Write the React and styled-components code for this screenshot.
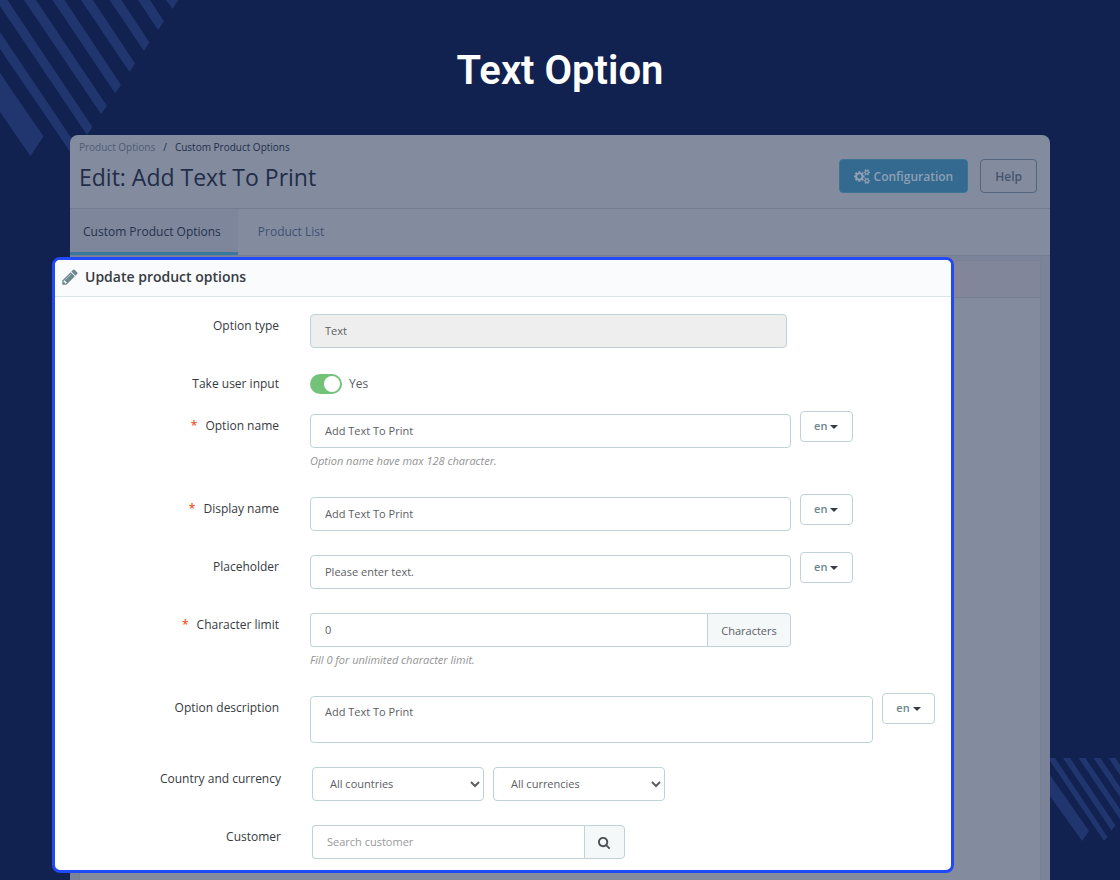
import React from 'react'
import styled, { createGlobalStyle, css } from 'styled-components'

const GlobalStyle = createGlobalStyle`
  *, *::before, *::after {
    box-sizing: border-box;
  }
  body {
    margin: 0;
    background: #112150;
    color: #363a41;
    font-family: 'Open Sans', 'Noto Sans', sans-serif;
    font-size: 12px;
  }
  button, input, select, textarea {
    font-family: inherit;
    margin: 0;
  }
`

const Page = styled.div`
  position: relative;
  display: flex;
  flex-direction: column;
  min-height: 100vh;
  padding: 0 70px;
  overflow: hidden;
`

const Stripes = styled.svg`
  position: absolute;
  fill: #21366f;
  ${({ corner }) =>
    corner === 'top'
      ? css`
          top: 0;
          left: 0;
        `
      : css`
          right: 0;
          bottom: 39px;
        `}
`

const Title = styled.h1`
  margin: 0;
  padding: 47px 0 40px;
  color: #fff;
  font-family: Roboto, sans-serif;
  font-size: 40px;
  font-weight: 600;
  line-height: 48px;
  text-align: center;
`

const Backdrop = styled.main`
  position: relative;
  flex: 1;
  display: flex;
  flex-direction: column;
  border-radius: 8px 8px 0 0;
  background: #838b9f;
`

const TopBar = styled.header`
  display: flex;
  justify-content: space-between;
  align-items: center;
  height: 74px;
  padding: 0 13px 0 9px;
  border-bottom: 1px solid #737c92;
`

const Crumbs = styled.nav`
  display: flex;
  gap: 8px;
  color: #222e4a;
  font-size: 10px;
  line-height: 16px;

  a {
    color: #4f5b74;
    text-decoration: none;
  }
`

const PageName = styled.h2`
  margin: 4px 0 10px;
  color: #222d48;
  font-size: 23px;
  font-weight: 400;
  line-height: 36px;
`

const Actions = styled.div`
  display: flex;
  gap: 12px;
  padding-top: 8px;
`

const ActionButton = styled.button`
  display: flex;
  align-items: center;
  gap: 4px;
  height: 34px;
  padding: 2px 14px 0;
  border: 1px solid ${({ primary }) => (primary ? '#3b7596' : '#54657f')};
  border-radius: 4px;
  background: ${({ primary }) => (primary ? '#346a90' : 'transparent')};
  color: ${({ primary }) => (primary ? '#8f9fb4' : '#43536e')};
  font-size: 12px;
  font-weight: 600;
`

const Tabs = styled.nav`
  display: flex;
  height: 47px;
  border-bottom: 1px solid #747d92;
`

const Tab = styled.a`
  padding: 0 ${({ active }) => (active ? 17 : 20)}px 0 ${({ active }) => (active ? 13 : 20)}px;
  border-bottom: 3px solid ${({ active }) => (active ? '#387a9e' : 'transparent')};
  background: ${({ active }) => (active ? '#7d869b' : 'transparent')};
  color: ${({ active }) => (active ? '#25314d' : '#3f5173')};
  font-size: 12px;
  line-height: 46px;
  text-decoration: none;
`

const Body = styled.div`
  flex: 1;
  display: grid;
  padding: 0 9px;
  background: #7a8397;
`

const BackCard = styled.div`
  grid-area: 1 / 1;
  margin-top: 4px;
  border: 1px solid #788095;
  border-bottom: 0;
  background: #838b9f;

  &::before {
    content: '';
    display: block;
    height: 37px;
    border-bottom: 1px solid #757e93;
    background: #81869b;
  }
`

const Card = styled.section`
  grid-area: 1 / 1;
  z-index: 1;
  align-self: start;
  margin: 1px 87px 7px -27px;
  border: 3px solid #2149f5;
  border-radius: 8px;
  background: #fff;
  overflow: hidden;
`

const CardHeader = styled.h3`
  display: flex;
  align-items: center;
  gap: 6px;
  height: 37px;
  margin: 0;
  padding: 0 6px 3px;
  border-bottom: 1px solid #dbe6e9;
  background: #fafbfc;
  font-size: 14px;
  font-weight: 600;

  svg {
    color: #6c868e;
  }
`

const Form = styled.form`
  display: flex;
  flex-direction: column;
  gap: 24px;
  padding: 17px 0 11px;
`

const Row = styled.div`
  display: flex;
  align-items: flex-start;
  gap: 31px;
  ${({ shifted }) => shifted && 'padding-left: 2px;'}
  ${({ short }) => short && 'height: 18px;'}
`

const Label = styled.label`
  width: 224px;
  flex-shrink: 0;
  font-size: 12px;
  line-height: 24px;
  text-align: right;

  em {
    margin-right: 5px;
    color: #f0541e;
    font-style: normal;
    font-weight: 600;
  }
`

const Field = styled.div`
  display: flex;
  flex: 1;
  gap: 9px;
  ${({ wide }) => wide && 'padding-right: 16px;'}
`

const Column = styled.div`
  ${({ wide }) => (wide ? 'flex: 1;' : 'width: 75%;')}
`

const box = css`
  border: 1px solid #c0d2d7;
  border-radius: 4px;
  background: #fff;
  color: #5b5e63;
  font-size: 11px;
`

const Input = styled.input`
  ${box}
  display: block;
  width: 100%;
  height: 34px;
  padding: 0 14px 2px;

  &:disabled {
    width: calc(75% - 4px);
    background: #eee;
  }
  &::placeholder {
    color: #98999c;
    opacity: 1;
  }
`

const TextArea = styled.textarea`
  ${box}
  display: block;
  width: 100%;
  height: 47px;
  padding: 7px 14px;
  line-height: 16px;
  resize: none;
`

const Select = styled.select`
  ${box}
  width: 172px;
  height: 34px;
  padding: 0 0 1px 13px;
`

const Group = styled.div`
  display: flex;
  width: ${({ width }) => width || '100%'};

  input {
    flex: 1;
    width: auto;
    min-width: 0;
    border-right: 0;
    border-radius: 4px 0 0 4px;
  }
`

const addon = css`
  ${box}
  display: flex;
  align-items: center;
  height: 34px;
  padding: 0 13px;
  border-radius: 0 4px 4px 0;
  background: #f5f8f9;
`

const Addon = styled.span`
  ${addon}
`

const SearchButton = styled.button`
  ${addon}
  width: 41px;
  color: #4c4e53;
`

const Help = styled.p`
  margin: 0;
  color: #929395;
  font-size: 11px;
  font-style: italic;
  line-height: 25px;
`

const LangButton = styled.button`
  ${box}
  display: flex;
  align-items: center;
  justify-content: center;
  gap: 3px;
  width: 53px;
  height: 31px;
  margin-top: -3px;
  padding: 0 0 2px;
  color: #6c868e;
  font-weight: 600;

  &::after {
    content: '';
    margin-top: 3px;
    border: 4px solid transparent;
    border-top-color: #363a41;
    border-bottom: 0;
  }
`

const Switch = styled.input`
  appearance: none;
  width: 32px;
  height: 20px;
  padding: 2px;
  border-radius: 10px;
  background: #b3c7cd;

  &::before {
    content: '';
    display: block;
    width: 16px;
    height: 16px;
    border-radius: 50%;
    background: #fff;
  }
  &:checked {
    background: #72c279;
  }
  &:checked::before {
    margin-left: 12px;
  }
`

const SwitchLine = styled.div`
  display: flex;
  align-items: center;
  gap: 7px;
  margin-top: 2px;
  color: #5b5e63;
  font-size: 12px;
  line-height: 20px;
`

const CogsIcon = () => (
  <svg width="16" height="15" viewBox="0 0 1920 1792" fill="currentColor" aria-hidden="true">
    <path d="M896 896q0-106-75-181t-181-75-181 75-75 181 75 181 181 75 181-75 75-181zm768 512q0-52-38-90t-90-38-90 38-38 90q0 53 37.5 90.5t90.5 37.5 90.5-37.5 37.5-90.5zm0-1024q0-52-38-90t-90-38-90 38-38 90q0 53 37.5 90.5t90.5 37.5 90.5-37.5 37.5-90.5zm-384 421v185q0 10-7 19.5t-16 10.5l-155 24q-11 35-32 76 34 48 90 115 7 10 7 20 0 12-7 19-23 30-82.5 89.5t-78.5 59.5q-11 0-21-7l-115-90q-37 19-77 31-11 108-23 155-7 24-30 24h-186q-11 0-20-7.5t-10-17.5l-23-153q-34-10-75-31l-118 89q-7 7-20 7-11 0-21-8-144-133-144-160 0-9 7-19 10-14 41-53t47-61q-23-44-35-82l-152-24q-10-1-17-9.5t-7-19.5v-185q0-10 7-19.5t16-10.5l155-24q11-35 32-76-34-48-90-115-7-11-7-20 0-12 7-20 22-30 82-89t79-59q11 0 21 7l115 90q34-18 77-32 11-108 23-154 7-24 30-24h186q11 0 20 7.5t10 17.5l23 153q34 10 75 31l118-89q8-7 20-7 11 0 21 8 144 133 144 160 0 9-7 19-12 16-42 54t-45 60q23 48 34 82l152 23q10 2 17 10.5t7 19.5zm640 533v140q0 16-149 31-12 27-30 52 51 113 51 138 0 4-4 7-122 71-124 71-8 0-46-47t-52-68q-20 2-30 2t-30-2q-14 21-52 68t-46 47q-2 0-124-71-4-3-4-7 0-25 51-138-18-25-30-52-149-15-149-31v-140q0-16 149-31 13-29 30-52-51-113-51-138 0-4 4-7 4-2 35-20t59-34 30-16q8 0 46 46.5t52 67.5q20-2 30-2t30 2q51-71 92-112l6-2q4 0 124 70 4 3 4 7 0 25-51 138 17 23 30 52 149 15 149 31zm0-1024v140q0 16-149 31-12 27-30 52 51 113 51 138 0 4-4 7-122 71-124 71-8 0-46-47t-52-68q-20 2-30 2t-30-2q-14 21-52 68t-46 47q-2 0-124-71-4-3-4-7 0-25 51-138-18-25-30-52-149-15-149-31v-140q0-16 149-31 13-29 30-52-51-113-51-138 0-4 4-7 4-2 35-20t59-34 30-16q8 0 46 46.5t52 67.5q20-2 30-2t30 2q51-71 92-112l6-2q4 0 124 70 4 3 4 7 0 25-51 138 17 23 30 52 149 15 149 31z" />
  </svg>
)

const PencilIcon = () => (
  <svg width="18" height="18" viewBox="0 0 1792 1792" fill="currentColor" aria-hidden="true">
    <path d="M491 1536l91-91-235-235-91 91v107h128v128h107zm523-928q0-22-22-22-10 0-17 7l-542 542q-7 7-7 17 0 22 22 22 10 0 17-7l542-542q7-7 7-17zm-54-192l416 416-832 832h-416v-416zm683 96q0 53-37 90l-166 166-416-416 166-165q36-38 90-38 53 0 91 38l235 234q37 39 37 91z" />
  </svg>
)

const SearchIcon = () => (
  <svg width="13" height="13" viewBox="0 0 1792 1792" fill="currentColor" aria-hidden="true">
    <path d="M1152 832q0-185-131.5-316.5t-316.5-131.5-316.5 131.5-131.5 316.5 131.5 316.5 316.5 131.5 316.5-131.5 131.5-316.5zm512 832q0 52-38 90t-90 38q-54 0-90-38l-343-342q-179 124-399 124-143 0-273.5-55.5t-225-150-150-225-55.5-273.5 55.5-273.5 150-225 225-150 273.5-55.5 273.5 55.5 225 150 150 225 55.5 273.5q0 220-124 399l343 343q37 37 37 90z" />
  </svg>
)

const Lang = () => (
  <LangButton type="button" aria-haspopup="menu">
    en
  </LangButton>
)

function TextRow({ id, label, value, required, help, unit }) {
  const input = <Input id={id} type="text" defaultValue={value} />
  return (
    <Row>
      <Label htmlFor={id}>
        {required && <em>*</em>} {label}
      </Label>
      <Field>
        <Column>
          {unit ? (
            <Group>
              {input}
              <Addon>{unit}</Addon>
            </Group>
          ) : (
            input
          )}
          {help && <Help>{help}</Help>}
        </Column>
        {!unit && <Lang />}
      </Field>
    </Row>
  )
}

export default function App() {
  return (
    <Page>
      <GlobalStyle />
      <Stripes corner="top" width="180" height="160" aria-hidden="true">
        <path d="M0 73L43.5 136.5L30.5 156L0 112z" />
        <path d="M0 32L78 148L73 156L0 49z" />
        <path d="M-4 0H7.5L92.5 127L87 135z" />
        <path d="M24 0H36L107 106L101 114z" />
        <path d="M52.5 0H64.5L121 85L115 93z" />
        <path d="M81 0H93L135 63.5L129.5 72z" />
        <path d="M109.5 0H121.5L149.5 42.5L144 51z" />
        <path d="M138 0H150L164 21.5L158 30z" />
        <path d="M166 0H178.5L172.5 9z" />
      </Stripes>
      <Stripes corner="bottom" width="70" height="83" aria-hidden="true">
        <path d="M0 17L39 73L32 83L0 38z" />
        <path d="M-2 0H5L57.5 79L54 83z" />
        <path d="M13 0H20L65.5 67.5L61.5 72.5z" />
        <path d="M28.5 0H35.5L80 66L76 70z" />
        <path d="M43.5 0H50.5L95 66L91 70z" />
        <path d="M58.5 0H65.5L110 66L106 70z" />
      </Stripes>
      <Title>Text Option</Title>
      <Backdrop>
        <TopBar>
          <div>
            <Crumbs>
              <a href="#options">Product Options</a>
              <span>/</span>
              <span>Custom Product Options</span>
            </Crumbs>
            <PageName>Edit: Add Text To Print</PageName>
          </div>
          <Actions>
            <ActionButton type="button" primary="true">
              <CogsIcon />
              Configuration
            </ActionButton>
            <ActionButton type="button">Help</ActionButton>
          </Actions>
        </TopBar>
        <Tabs>
          <Tab href="#custom" active="true">
            Custom Product Options
          </Tab>
          <Tab href="#list">Product List</Tab>
        </Tabs>
        <Body>
          <BackCard />
          <Card>
            <CardHeader>
              <PencilIcon />
              Update product options
            </CardHeader>
            <Form>
              <Row>
                <Label htmlFor="type">Option type</Label>
                <Field>
                  <Input id="type" type="text" defaultValue="Text" disabled />
                </Field>
              </Row>
              <Row short>
                <Label htmlFor="user-input">Take user input</Label>
                <SwitchLine>
                  <Switch id="user-input" type="checkbox" defaultChecked />
                  Yes
                </SwitchLine>
              </Row>
              <TextRow
                id="name"
                label="Option name"
                value="Add Text To Print"
                help="Option name have max 128 character."
                required
              />
              <TextRow id="display" label="Display name" value="Add Text To Print" required />
              <TextRow id="placeholder" label="Placeholder" value="Please enter text." />
              <TextRow
                id="limit"
                label="Character limit"
                value="0"
                unit="Characters"
                help="Fill 0 for unlimited character limit."
                required
              />
              <Row>
                <Label htmlFor="description">Option description</Label>
                <Field wide>
                  <Column wide>
                    <TextArea id="description" defaultValue="Add Text To Print" />
                  </Column>
                  <Lang />
                </Field>
              </Row>
              <Row shifted>
                <Label htmlFor="country">Country and currency</Label>
                <Field>
                  <Select id="country">
                    <option>All countries</option>
                  </Select>
                  <Select aria-label="Currency">
                    <option>All currencies</option>
                  </Select>
                </Field>
              </Row>
              <Row shifted>
                <Label htmlFor="customer">Customer</Label>
                <Group width="313px">
                  <Input id="customer" type="text" placeholder="Search customer" />
                  <SearchButton type="button" aria-label="Search">
                    <SearchIcon />
                  </SearchButton>
                </Group>
              </Row>
            </Form>
          </Card>
        </Body>
      </Backdrop>
    </Page>
  )
}
